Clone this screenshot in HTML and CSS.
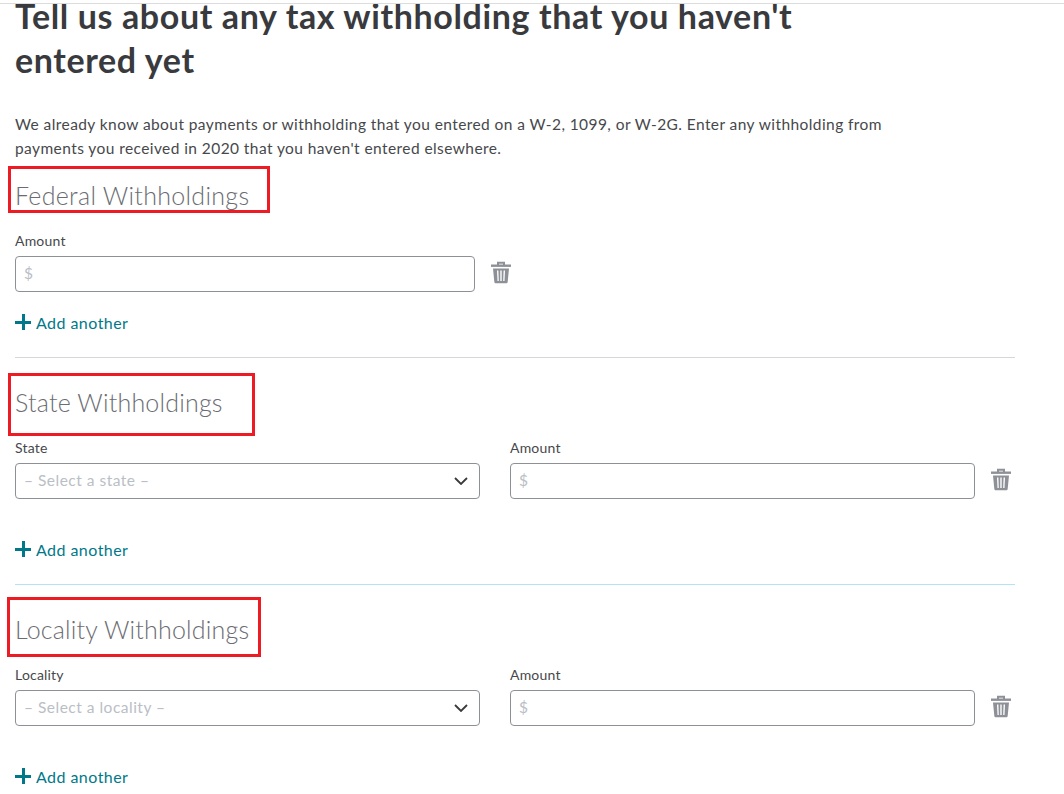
FILE: index.html
```html
<!DOCTYPE html>
<html lang="en">
<head>
    <meta charset="UTF-8">
    <title>Tax Withholding</title>
    <link rel="stylesheet" href="styles.css">
</head>
<body>
    <svg class="icon-defs" width="0" height="0">
        <symbol id="trash" viewBox="0 0 20 23">
            <path d="M7 4V1.800h6V4" fill="none" stroke="currentColor" stroke-width="2"/>
            <path d="M0 3.500h20v2.400H0z" fill="currentColor"/>
            <path d="M2 7.500h16l-1.300 13.200c-.1 1-.8 1.600-1.700 1.600H5c-.9 0-1.600-.6-1.700-1.600zM6 9.500l.5 10.500h1.300L7.400 9.500zm3.300 0V20h1.400V9.500zm3.300 0L12.200 20h1.300l.5-10.500z" fill="currentColor" fill-rule="evenodd"/>
        </symbol>
    </svg>

    <main class="page">
        <h1>Tell us about any tax withholding that you haven't <span class="title-end">entered yet</span></h1>
        <p class="intro">We already know about payments or withholding that you entered on a W-2, 1099, or W-2G. Enter any withholding from payments you received in 2020 that you haven't entered elsewhere.</p>

        <!-- Federal -->
        <section class="section federal">
            <span class="mark mark-federal"></span>
            <h2>Federal Withholdings</h2>
            <div class="row">
                <div class="field field-single">
                    <label>Amount</label>
                    <div class="box">$</div>
                </div>
                <svg class="trash"><use href="#trash"/></svg>
            </div>
            <a href="#" class="add"><span class="plus"></span>Add another</a>
        </section>

        <!-- State -->
        <section class="section state">
            <span class="mark mark-state"></span>
            <h2>State Withholdings</h2>
            <div class="row">
                <div class="field field-select">
                    <label>State</label>
                    <div class="box">– Select a state –
                        <svg class="chevron" viewBox="0 0 14 8"><path d="M1 1l6 6 6-6" fill="none" stroke="currentColor" stroke-width="1.800"/></svg>
                    </div>
                </div>
                <div class="field field-amount">
                    <label>Amount</label>
                    <div class="box">$</div>
                </div>
                <svg class="trash"><use href="#trash"/></svg>
            </div>
            <a href="#" class="add"><span class="plus"></span>Add another</a>
        </section>

        <!-- Locality -->
        <section class="section locality">
            <span class="mark mark-locality"></span>
            <h2>Locality Withholdings</h2>
            <div class="row">
                <div class="field field-select">
                    <label>Locality</label>
                    <div class="box">– Select a locality –
                        <svg class="chevron" viewBox="0 0 14 8"><path d="M1 1l6 6 6-6" fill="none" stroke="currentColor" stroke-width="1.800"/></svg>
                    </div>
                </div>
                <div class="field field-amount">
                    <label>Amount</label>
                    <div class="box">$</div>
                </div>
                <svg class="trash"><use href="#trash"/></svg>
            </div>
            <a href="#" class="add"><span class="plus"></span>Add another</a>
        </section>
    </main>
</body>
</html>
```

FILE: styles.css
```css
* {
    margin: 0;
    padding: 0;
    box-sizing: border-box;
}

body {
    font-family: 'Lato', sans-serif;
    background: #FFFFFF;
    color: #393A3D;
    height: 791px;
    overflow: hidden;
    border-top: 1px solid #DCDCDC;
    margin-top: 3px;
}

.icon-defs {
    position: absolute;
}

.page {
    width: 1015px;
    padding-left: 15px;
}

h1 {
    font-size: 34px;
    line-height: 26px;
    font-weight: 700;
    letter-spacing: 0.62px;
    color: #393A3D;
    margin-top: -1px;
}

.title-end {
    display: block;
    margin-top: 18px;
}

.intro {
    font-size: 15.500px;
    line-height: 24px;
    letter-spacing: 0.42px;
    width: 890px;
    margin-top: 39px;
    color: #47484B;
}

.section {
    position: relative;
    border-bottom: 1px solid #D4D7DC;
    height: 227px;
}

.federal {
    height: 198px;
}

.state {
    border-bottom-color: #B5E3F5;
}

.locality {
    border-bottom: none;
}

h2 {
    font-size: 25px;
    font-weight: 300;
    line-height: 32px;
    letter-spacing: 0.2px;
    color: #6B6C72;
    padding-top: 28px;
    height: 81px;
}

.federal h2 {
    padding-top: 19px;
    height: 72px;
    letter-spacing: 0.3px;
}

.mark {
    position: absolute;
    border: 3px solid #ED1C24;
}

.mark-federal {
    left: -7px;
    top: 6px;
    width: 262px;
    height: 47px;
}

.mark-state {
    left: -7px;
    top: 15px;
    width: 247px;
    height: 63px;
}

.mark-locality {
    left: -8px;
    top: 12px;
    width: 254px;
    height: 60px;
}

.row {
    display: flex;
    align-items: flex-start;
}

.field label {
    display: block;
    font-size: 14px;
    line-height: 18px;
    letter-spacing: 0.2px;
    margin-bottom: 6px;
    color: #47484B;
}

.field-single {
    width: 460px;
}

.field-select {
    width: 465px;
}

.field-amount {
    width: 465px;
    margin-left: 30px;
}

.box {
    position: relative;
    height: 36px;
    border: 1px solid #8D9096;
    border-radius: 4px;
    padding-left: 8px;
    font-size: 15.500px;
    line-height: 32px;
    letter-spacing: 0.5px;
    color: #BABEC5;
}

.chevron {
    position: absolute;
    right: 11px;
    top: 13px;
    width: 14px;
    height: 8px;
    color: #393A3D;
}

.trash {
    width: 20px;
    height: 23px;
    margin: 29px 0 0 16px;
    color: #8D9096;
}

.add {
    display: flex;
    align-items: center;
    margin-top: 19px;
    height: 22px;
    font-size: 16px;
    letter-spacing: 0.45px;
    color: #00788A;
    text-decoration: none;
}

.state .add,
.locality .add {
    margin-top: 39px;
}

.plus {
    position: relative;
    width: 16px;
    height: 16px;
    margin: 0 5px 0 0;
}

.plus::before,
.plus::after {
    content: "";
    position: absolute;
    background: #00788A;
}

.plus::before {
    left: 0;
    right: 0;
    top: 7px;
    height: 2.500px;
}

.plus::after {
    top: 0;
    bottom: 0;
    left: 7px;
    width: 2.500px;
}
```
